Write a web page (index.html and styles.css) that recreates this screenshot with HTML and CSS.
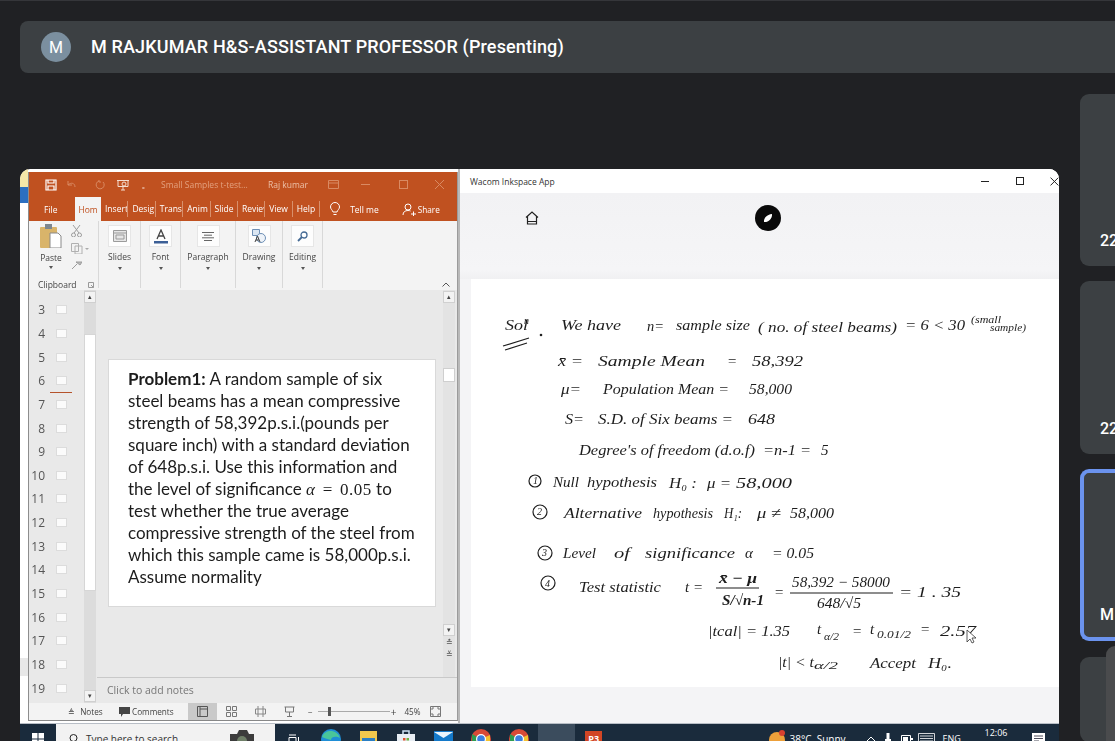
FILE: index.html
```html
<!DOCTYPE html>
<html lang="en">
<head>
<meta charset="utf-8">
<title>Presentation</title>
<link rel="stylesheet" href="styles.css">
</head>
<body>
<header class="bar">
  <span class="avatar">M</span>
  <span class="bar-name">M RAJKUMAR H&amp;S-ASSISTANT PROFESSOR (Presenting)</span>
</header>
<main class="stage">
  <section class="share">
    <div class="desktop">
      <div class="peek"><i class="peek-y"></i><i class="peek-b"></i><i class="peek-w"></i><i class="peek-g"></i><i class="peek-w2"></i></div>
      <div class="ppt">
        <div class="ppt-title">
          <svg class="qa qa-save" width="12" height="12" viewBox="0 0 12 12"><path d="M1 1h10v10H1zM3 1v3h6V1M3 11V7h6v4" fill="none" stroke="#fff" stroke-width="1.2"/></svg>
          <svg class="qa qa-undo" width="14" height="10" viewBox="0 0 14 10"><path d="M2 1v4h4M2 5c3-3 7-2 7 2" fill="none" stroke="#d98a63" stroke-width="1"/></svg>
          <svg class="qa qa-redo" width="10" height="10" viewBox="0 0 10 10"><path d="M8 2a4 4 0 1 1-4-1M4 0v2h2" fill="none" stroke="#d98a63" stroke-width="1"/></svg>
          <svg class="qa qa-show" width="12" height="12" viewBox="0 0 12 12"><path d="M0 1.5h12M1 1.5v6h10v-6M6 8v3M4 11h4" fill="none" stroke="#f4ddd0" stroke-width="1"/><circle cx="7" cy="5" r="2" fill="none" stroke="#f4ddd0"/></svg>
          <span class="qa-drop">₌</span>
          <span class="doc-name">Small Samples t-test...</span>
          <span class="user-name">Raj kumar</span>
          <svg class="qa qa-disp" width="11" height="9" viewBox="0 0 11 9"><path d="M.5.5h10v8H.5zM.5 3h10" fill="none" stroke="#d98a63"/></svg>
          <span class="win-min"></span>
          <span class="win-max"></span>
          <svg class="qa qa-close" width="9" height="9" viewBox="0 0 9 9"><path d="M0 0l9 9M9 0L0 9" stroke="#d98a63"/></svg>
        </div>
        <nav class="ppt-tabs">
          <span class="tab-file">File</span>
          <span class="tab-home">Hom</span>
          <span class="tab">Insert</span>
          <span class="tab">Design</span>
          <span class="tab">Trans</span>
          <span class="tab">Anim</span>
          <span class="tab">Slide</span>
          <span class="tab">Review</span>
          <span class="tab">View</span>
          <span class="tab">Help</span>
          <svg class="bulb" width="12" height="14" viewBox="0 0 12 14"><path d="M4 10C3.500 8 1.500 7 1.500 5a4.500 4.500 0 0 1 9 0c0 2-2 3-2.500 5zM4.500 12.500h3" fill="none" stroke="#fff"/></svg>
          <span class="tell">Tell me</span>
          <svg class="share-ico" width="14" height="13" viewBox="0 0 14 13"><circle cx="6" cy="4" r="3" fill="none" stroke="#fff"/><path d="M1 12c0-3 2-4.500 5-4.500 1 0 2 .2 2.500.5M9 11h5M11.500 8.500v5" fill="none" stroke="#fff"/></svg>
          <span class="share-label">Share</span>
        </nav>
        <div class="ribbon">
          <div class="rgroup rgroup-clip">
            <div class="clip-top">
              <div class="paste">
                <svg width="22" height="24" viewBox="0 0 22 24"><rect x="0" y="3" width="17" height="21" rx="1" fill="#d9b46a"/><rect x="5" y="0" width="7" height="5" fill="#7d8790"/><path d="M10 9h8l3 3v12H10z" fill="#fff" stroke="#8a8a8a"/></svg>
                <span class="rlabel">Paste</span>
                <span class="caret"></span>
              </div>
              <div class="clip-small">
                <svg width="11" height="12" viewBox="0 0 11 12"><path d="M2 0l6 8M9 0L3 8" stroke="#9c9c9c" fill="none"/><circle cx="2.500" cy="10" r="2" fill="none" stroke="#9c9c9c"/><circle cx="8.500" cy="10" r="2" fill="none" stroke="#9c9c9c"/></svg>
                <svg width="18" height="11" viewBox="0 0 18 11"><path d="M.5.5h7v8h-7zM4 3h7v8H4z" fill="#f3f3f3" stroke="#b0b0b0"/><path d="M14 5l2 2 2-2" fill="#aaa"/></svg>
                <svg width="11" height="10" viewBox="0 0 11 10"><path d="M1 9l5-5M5 2l4 3 2-3z" stroke="#9c9c9c" fill="#bbb"/></svg>
              </div>
            </div>
            <div class="clip-name"><span>Clipboard</span><svg width="6" height="6" viewBox="0 0 6 6"><path d="M.5.5h5v5h-5zM3 3l2.500 2.500" fill="none" stroke="#999"/></svg></div>
          </div>
          <div class="rgroup rgroup-slides">
            <span class="rbtn"><svg width="14" height="12" viewBox="0 0 14 12"><path d="M.5.5h13v11H.5zM.5 3h13M3 5h8v4H3z" fill="#e6e6e6" stroke="#9b9b9b"/></svg></span>
            <span class="rlabel">Slides</span><span class="caret"></span>
          </div>
          <div class="rgroup rgroup-font">
            <span class="rbtn"><svg width="14" height="15" viewBox="0 0 14 15"><path d="M3 10l4-9 4 9M4.500 7h5" fill="none" stroke="#444" stroke-width="1.300"/><rect y="12" width="14" height="2.500" fill="#3c5f96"/></svg></span>
            <span class="rlabel">Font</span><span class="caret"></span>
          </div>
          <div class="rgroup rgroup-para">
            <span class="rbtn"><svg width="12" height="9" viewBox="0 0 12 9"><path d="M0 .5h12M2 3.200h8M0 5.800h12M2 8.500h8" stroke="#666"/></svg></span>
            <span class="rlabel">Paragraph</span><span class="caret"></span>
          </div>
          <div class="rgroup rgroup-draw">
            <span class="rbtn"><svg width="14" height="14" viewBox="0 0 14 14"><path d="M.5.5h7v6h-7z" fill="#dbe6f2" stroke="#6e8fb5"/><circle cx="9" cy="9" r="4.500" fill="#eef3f9" stroke="#6e8fb5"/><path d="M3 13l2.500-6 2.500 6M4 11h3" fill="none" stroke="#444"/></svg></span>
            <span class="rlabel">Drawing</span><span class="caret"></span>
          </div>
          <div class="rgroup rgroup-edit">
            <span class="rbtn"><svg width="11" height="11" viewBox="0 0 11 11"><circle cx="7" cy="4" r="3" fill="#fff" stroke="#456a94" stroke-width="1.300"/><path d="M5 6l-4 4" stroke="#456a94" stroke-width="1.800"/></svg></span>
            <span class="rlabel">Editing</span><span class="caret"></span>
          </div>
          <svg class="collapse" width="8" height="5" viewBox="0 0 8 5"><path d="M.5 4.500L4 1l3.500 3.500" fill="none" stroke="#555"/></svg>
        </div>
        <div class="workspace">
          <aside class="thumbs">
            <ol class="thumb-list">
              <li><span class="num">3</span><i class="thumb"></i></li>
              <li><span class="num">4</span><i class="thumb"></i></li>
              <li><span class="num">5</span><i class="thumb"></i></li>
              <li><span class="num">6</span><i class="thumb"></i></li>
              <li><span class="num">7</span><i class="thumb"></i></li>
              <li><span class="num">8</span><i class="thumb"></i></li>
              <li><span class="num">9</span><i class="thumb"></i></li>
              <li><span class="num">10</span><i class="thumb"></i></li>
              <li><span class="num">11</span><i class="thumb"></i></li>
              <li><span class="num">12</span><i class="thumb"></i></li>
              <li><span class="num">13</span><i class="thumb"></i></li>
              <li><span class="num">14</span><i class="thumb"></i></li>
              <li><span class="num">15</span><i class="thumb"></i></li>
              <li><span class="num">16</span><i class="thumb"></i></li>
              <li><span class="num">17</span><i class="thumb"></i></li>
              <li><span class="num">18</span><i class="thumb"></i></li>
              <li><span class="num">19</span><i class="thumb"></i></li>
            </ol>
            <i class="insert-mark"></i>
            <div class="vscroll">
              <span class="sbtn">▴</span>
              <i class="vthumb"></i>
              <span class="sbtn sbtn-end">▾</span>
            </div>
          </aside>
          <div class="editor">
            <div class="editor-top">
              <div class="slide-wrap">
                <article class="slide">
                  <p><b>Problem1:</b> A random sample of six steel beams has a mean compressive strength of 58,392p.s.i.(pounds per square inch) with a standard deviation of 648p.s.i. Use this information and the level of significance <span class="math"><i>α</i> = 0.05</span> to test whether the true average compressive strength of the steel from which this sample came is 58,000p.s.i. Assume normality</p>
                </article>
              </div>
              <div class="rscroll">
                <span class="sbtn">▴</span>
                <i class="rthumb"></i>
                <span class="sbtn rs-down">▾</span>
                <span class="rs-page">≛</span>
                <span class="rs-page">≚</span>
              </div>
            </div>
            <div class="notes">Click to add notes</div>
          </div>
        </div>
        <footer class="status">
          <span class="st-notes">≜ Notes</span>
          <svg class="st-com-ico" width="11" height="10" viewBox="0 0 11 10"><path d="M0 0h11v7H4L2 10V7H0z" fill="#444"/></svg>
          <span class="st-com">Comments</span>
          <span class="view view-on"><svg width="11" height="11" viewBox="0 0 11 11"><path d="M.5.5h10v10H.5zM3 .5v10M3 3h7.500" fill="none" stroke="#555"/></svg></span>
          <span class="view"><svg width="11" height="11" viewBox="0 0 11 11"><path d="M.5.5h4v4h-4zM6.500.5h4v4h-4zM.5 6.500h4v4h-4zM6.500 6.500h4v4h-4z" fill="none" stroke="#777"/></svg></span>
          <span class="view"><svg width="11" height="11" viewBox="0 0 11 11"><path d="M.5 3h10v5H.5zM3 0v11M8 0v11" fill="none" stroke="#888"/></svg></span>
          <span class="view"><svg width="11" height="11" viewBox="0 0 11 11"><path d="M.5 1h10M1.500 1v5h8V1M5.500 6v4M3 10.500h5" fill="none" stroke="#777"/></svg></span>
          <span class="zoom-minus">−</span>
          <span class="zoom-track"><i class="zoom-knob"></i></span>
          <span class="zoom-plus">+</span>
          <span class="zoom-pct">45%</span>
          <svg class="fit" width="11" height="11" viewBox="0 0 11 11"><path d="M.5.5h10v10H.5zM2 4V2h2M9 4V2H7M2 7v2h2M9 7v2H7" fill="none" stroke="#777"/></svg>
        </footer>
      </div>
      <div class="split"></div>
      <div class="inkspace">
        <div class="ink-title">
          <span class="ink-app">Wacom Inkspace App</span>
          <span class="ink-min"></span>
          <span class="ink-max"></span>
          <svg class="ink-close" width="9" height="9" viewBox="0 0 9 9"><path d="M.5.500l8 8M8.500.5l-8 8" stroke="#222"/></svg>
        </div>
        <div class="ink-tools">
          <svg class="home" width="16" height="16" viewBox="0 0 16 16"><path d="M2 7.500L8 2l6 5.500M3.500 6.500v7.500h9V6.500M3 11.500h10" fill="none" stroke="#222" stroke-width="1.200"/></svg>
          <span class="pen"><svg width="12" height="12" viewBox="0 0 12 12"><path d="M2 10c-.5-4 3-7.500 8-8 .5 5-4 8.500-8 8z" fill="#fff"/></svg></span>
        </div>
        <div class="paper">
          <svg class="notes-svg" width="588" height="408" viewBox="471 279 588 408">
            <text class="ink" x="505" y="330" textLength="23" lengthAdjust="spacingAndGlyphs">Sol</text><text class="ink ink-sm" x="524" y="324">n</text>
            <path class="pen-line" d="M503 346l26-8M505 350l22-7"/>
            <circle cx="541" cy="335" r="1.300" fill="#222"/>
            <text class="ink" x="561" y="330" textLength="60" lengthAdjust="spacingAndGlyphs">We have</text>
            <text class="ink" x="647" y="331" textLength="17" lengthAdjust="spacingAndGlyphs">n=</text>
            <text class="ink" x="676" y="330" textLength="74" lengthAdjust="spacingAndGlyphs">sample size</text>
            <text class="ink" x="758" y="332" textLength="139" lengthAdjust="spacingAndGlyphs">( no. of steel beams)</text>
            <text class="ink" x="905" y="330" textLength="60" lengthAdjust="spacingAndGlyphs">= 6 &lt; 30</text>
            <text class="ink ink-sm" x="971" y="323" textLength="30" lengthAdjust="spacingAndGlyphs">(small</text>
            <text class="ink ink-sm" x="990" y="331" textLength="36" lengthAdjust="spacingAndGlyphs">sample)</text>

            <text class="ink" x="558" y="366" textLength="25" lengthAdjust="spacingAndGlyphs">x̄ =</text>
            <text class="ink" x="598" y="366" textLength="107" lengthAdjust="spacingAndGlyphs">Sample Mean</text>
            <text class="ink" x="727" y="366">=</text>
            <text class="ink" x="752" y="366" textLength="51" lengthAdjust="spacingAndGlyphs">58,392</text>

            <text class="ink" x="561" y="394" textLength="20" lengthAdjust="spacingAndGlyphs">μ=</text>
            <text class="ink" x="603" y="394" textLength="126" lengthAdjust="spacingAndGlyphs">Population Mean =</text>
            <text class="ink" x="749" y="394" textLength="43" lengthAdjust="spacingAndGlyphs">58,000</text>

            <text class="ink" x="565" y="424" textLength="19" lengthAdjust="spacingAndGlyphs">S=</text>
            <text class="ink" x="598" y="424" textLength="135" lengthAdjust="spacingAndGlyphs">S.D. of Six beams =</text>
            <text class="ink" x="748" y="424" textLength="27" lengthAdjust="spacingAndGlyphs">648</text>

            <text class="ink" x="579" y="455" textLength="176" lengthAdjust="spacingAndGlyphs">Degree's of freedom (d.o.f)</text>
            <text class="ink" x="763" y="455" textLength="48" lengthAdjust="spacingAndGlyphs">=n-1 =</text>
            <text class="ink" x="821" y="455">5</text>

            <circle class="pen-line" cx="535" cy="481" r="6"/>
            <text class="ink ink-sm" x="533" y="484">1</text>
            <text class="ink" x="553" y="487" textLength="26" lengthAdjust="spacingAndGlyphs">Null</text>
            <text class="ink" x="587" y="487" textLength="70" lengthAdjust="spacingAndGlyphs">hypothesis</text>
            <text class="ink" x="669" y="488" textLength="28" lengthAdjust="spacingAndGlyphs">H₀ :</text>
            <text class="ink" x="707" y="488" textLength="24" lengthAdjust="spacingAndGlyphs">μ =</text>
            <text class="ink" x="736" y="488" textLength="56" lengthAdjust="spacingAndGlyphs">58,000</text>

            <circle class="pen-line" cx="540" cy="512" r="7"/>
            <text class="ink ink-sm" x="537" y="515">2</text>
            <text class="ink" x="564" y="518" textLength="78" lengthAdjust="spacingAndGlyphs">Alternative</text>
            <text class="ink" x="653" y="518" textLength="60" lengthAdjust="spacingAndGlyphs">hypothesis</text>
            <text class="ink" x="724" y="518" textLength="18" lengthAdjust="spacingAndGlyphs">H₁:</text>
            <text class="ink" x="757" y="518" textLength="24" lengthAdjust="spacingAndGlyphs">μ ≠</text>
            <text class="ink" x="790" y="518" textLength="44" lengthAdjust="spacingAndGlyphs">58,000</text>

            <circle class="pen-line" cx="545" cy="553" r="7"/>
            <text class="ink ink-sm" x="542" y="556">3</text>
            <text class="ink" x="563" y="558" textLength="33" lengthAdjust="spacingAndGlyphs">Level</text>
            <text class="ink" x="614" y="558" textLength="16" lengthAdjust="spacingAndGlyphs">of</text>
            <text class="ink" x="645" y="558" textLength="90" lengthAdjust="spacingAndGlyphs">significance</text>
            <text class="ink" x="745" y="558">α</text>
            <text class="ink" x="772" y="558" textLength="42" lengthAdjust="spacingAndGlyphs">= 0.05</text>

            <circle class="pen-line" cx="548" cy="583" r="7"/>
            <text class="ink ink-sm" x="545" y="587">4</text>
            <text class="ink" x="579" y="592" textLength="82" lengthAdjust="spacingAndGlyphs">Test statistic</text>
            <text class="ink" x="685" y="592" textLength="18" lengthAdjust="spacingAndGlyphs">t =</text>
            <text class="ink ink-b" x="719" y="583" textLength="38" lengthAdjust="spacingAndGlyphs">x̄ − μ</text>
            <path class="pen-line" d="M716 588h43M790 593h103"/>
            <text class="ink ink-b" x="722" y="605" textLength="42" lengthAdjust="spacingAndGlyphs">S/√n-1</text>
            <text class="ink" x="774" y="597">=</text>
            <text class="ink" x="792" y="587" textLength="98" lengthAdjust="spacingAndGlyphs">58,392 − 58000</text>
            <text class="ink" x="817" y="608" textLength="44" lengthAdjust="spacingAndGlyphs">648/√5</text>
            <text class="ink" x="899" y="597" textLength="62" lengthAdjust="spacingAndGlyphs">= 1 . 35</text>

            <text class="ink" x="708" y="636" textLength="82" lengthAdjust="spacingAndGlyphs">|tcal| = 1.35</text>
            <text class="ink" x="817" y="634">t</text><text class="ink ink-sm" x="824" y="640" textLength="15" lengthAdjust="spacingAndGlyphs">α/2</text>
            <text class="ink" x="852" y="636">=</text>
            <text class="ink" x="870" y="634">t</text><text class="ink ink-sm" x="877" y="638" textLength="34" lengthAdjust="spacingAndGlyphs">0.01/2</text>
            <text class="ink" x="920" y="634">=</text>
            <text class="ink" x="940" y="636" textLength="36" lengthAdjust="spacingAndGlyphs">2.57</text>
            <path d="M967 630v12l3-3 2 4 2-1-2-4h4z" fill="#fff" stroke="#333" stroke-width=".8"/>

            <text class="ink" x="778" y="667" textLength="36" lengthAdjust="spacingAndGlyphs">|t| &lt; t</text><text class="ink ink-sm" x="814" y="669" textLength="24" lengthAdjust="spacingAndGlyphs">α/2</text>
            <text class="ink" x="870" y="668" textLength="46" lengthAdjust="spacingAndGlyphs">Accept</text>
            <text class="ink" x="928" y="668" textLength="24" lengthAdjust="spacingAndGlyphs">H₀.</text>
          </svg>
        </div>
      </div>
    </div>
    <footer class="taskbar">
      <span class="start"><svg width="12" height="12" viewBox="0 0 12 12"><path d="M0 0h5.500v5.500H0zM6.500 0H12v5.500H6.500zM0 6.500h5.500V12H0zM6.500 6.500H12V12H6.500z" fill="#fff"/></svg></span>
      <div class="search">
        <svg width="10" height="10" viewBox="0 0 10 10"><circle cx="5.500" cy="4" r="3.500" fill="none" stroke="#222"/><path d="M3 7L0 10" stroke="#222"/></svg>
        <span class="search-text">Type here to search</span>
        <svg class="cam" width="28" height="22" viewBox="0 0 28 22"><path d="M2 6h7l2-4h8l2 4h5v16H2z" fill="#3c3c3c"/><circle cx="14" cy="13" r="5" fill="#6f7f68"/></svg>
      </div>
      <span class="tb"><svg width="12" height="10" viewBox="0 0 12 10"><path d="M1 3.500h7v5H1zM1 1h7M1 10h7M10.500 3v5" fill="none" stroke="#fff"/></svg></span>
      <span class="tb"><svg width="20" height="20" viewBox="0 0 20 20"><circle cx="10" cy="10" r="10" fill="#1f8ed6"/><path d="M1 8c3-8 15-8 18 1-3-2-9-2-9 2-4-1-7-2-9-3z" fill="#49c59a"/></svg></span>
      <span class="tb"><svg width="17" height="16" viewBox="0 0 17 16"><path d="M0 0h17v16H0z" fill="#f1c84d"/><path d="M2 7h13v4H2z" fill="#2b7fc4"/></svg></span>
      <span class="tb"><svg width="18" height="18" viewBox="0 0 18 18"><path d="M6 4V1h6v3" fill="none" stroke="#cfe3f4" stroke-width="1.500"/><path d="M0 4h18v14H0z" fill="#e8eef4"/><path d="M6 8h2.500v2.500H6z" fill="#e0502f"/><path d="M9.500 8H12v2.500H9.500z" fill="#6eb43f"/><path d="M6 11.500h2.500V14H6z" fill="#2d8fe0"/><path d="M9.500 11.500H12V14H9.500z" fill="#f6b81e"/></svg></span>
      <span class="tb"><svg width="19" height="16" viewBox="0 0 19 16"><path d="M0 0h19v16H0z" fill="#1479c9"/><path d="M0 1l9.500 6L19 1" fill="#eaf4fc"/></svg></span>
      <span class="tb"><svg width="20" height="20" viewBox="0 0 20 20"><circle cx="10" cy="10" r="10" fill="#d84a37"/><path d="M10 10L1 5v15h9z" fill="#2f9c50"/><path d="M10 10l9-4v14h-9z" fill="#f3c22f"/><circle cx="10" cy="10" r="5" fill="#fff"/><circle cx="10" cy="10" r="3.800" fill="#3b7fe0"/></svg></span>
      <span class="tb"><svg width="20" height="20" viewBox="0 0 20 20"><circle cx="10" cy="10" r="10" fill="#d84a37"/><path d="M10 10L1 5v15h9z" fill="#2f9c50"/><path d="M10 10l9-4v14h-9z" fill="#f3c22f"/><circle cx="10" cy="10" r="5" fill="#fff"/><circle cx="10" cy="10" r="3.800" fill="#3b7fe0"/></svg></span>
      <span class="tb tb-on"></span>
      <span class="tb"><span class="ppt-ico">P3</span></span>
      <div class="tray">
        <svg width="16" height="18" viewBox="0 0 16 18"><circle cx="8" cy="10" r="8" fill="#eda03a"/><circle cx="13" cy="3" r="3" fill="#d8402f"/></svg>
        <span class="tray-wx">38°C&nbsp; Sunny</span>
        <svg class="t-chev" width="10" height="6" viewBox="0 0 10 6"><path d="M.5 5.500L5 1l4.500 4.500" fill="none" stroke="#fff"/></svg>
        <svg class="t-usb" width="6" height="11" viewBox="0 0 6 11"><path d="M1.500 0h3v6h1.500v5H0V6h1.500z" fill="#fff"/></svg>
        <svg class="t-bat" width="12" height="9" viewBox="0 0 12 9"><path d="M.5 1.500h9v7h-9z" fill="none" stroke="#fff"/><path d="M10 4h2v2h-2zM2 3h5v4H2z" fill="#fff"/></svg>
        <svg class="t-key" width="17" height="12" viewBox="0 0 17 12"><path d="M.5.500h16v11H.5zM2 3h13M2 5.500h13M2 8h13" fill="none" stroke="#fff" stroke-width=".8"/></svg>
        <span class="t-eng">ENG</span>
        <span class="t-clock">12:06</span>
        <svg class="t-note" width="13" height="11" viewBox="0 0 13 11"><path d="M0 0h13v11H0z" fill="#fff"/><path d="M2 3h9M2 5.500h9M2 8h5" stroke="#223" stroke-width=".8"/></svg>
      </div>
    </footer>
  </section>
  <aside class="side">
    <div class="tile"><span class="tile-name">22</span></div>
    <div class="tile"><span class="tile-name">22</span></div>
    <div class="tile tile-active"><span class="tile-name">M</span></div>
    <div class="tile tile-last"><i class="tile-over"></i></div>
  </aside>
</main>
</body>
</html>
```

FILE: styles.css
```css
* { box-sizing: border-box; }
html, body { margin: 0; height: 741px; overflow: hidden; }
body { background: #202124; font-family: Roboto, "Liberation Sans", sans-serif; color: #fff; width: 1115px; padding-top: 21px; position: relative; border-top: 1px solid #35363a; }

.bar { height: 52px; margin: -1px 0 0 20px; width: 1095px; background: #3c4043; border-radius: 8px 0 0 8px; display: flex; align-items: center; padding-left: 21px; }
.avatar { width: 30px; height: 30px; border-radius: 50%; background: #7b8f9f; display: flex; align-items: center; justify-content: center; font-size: 16px; }
.bar-name { margin: -1px 0 0 20px; font-size: 18px; font-weight: 500; white-space: nowrap; letter-spacing: .15px; }

.stage { display: flex; margin-top: 21px; height: 647px; overflow: hidden; }
.share { margin: 75px 0 0 20px; width: 1039px; height: 572px; display: flex; flex-direction: column; background: #fff; border-radius: 10px 10px 0 0; overflow: hidden; flex: none; }
.desktop { display: flex; height: 554px; flex: none; }

.peek { width: 8px; flex: none; display: flex; flex-direction: column; }
.peek i { display: block; }
.peek-y { height: 18px; background: #f5e7a8; }
.peek-b { height: 16px; background: #2c6fc0; }
.peek-w { height: 455px; background: #fff; }
.peek-g { height: 18px; background: #e8e8e8; }
.peek-w2 { flex: 1; background: #fff; }

.ppt { width: 430px; flex: none; display: flex; flex-direction: column; font-family: "Open Sans", "Liberation Sans", sans-serif; background: #ededed; border-left: 1px solid #8d8d8d; border-right: 1px solid #9b9b9b; border-bottom: 1px solid #888; margin: 3px 0 2px; filter: blur(.35px); }

.ppt-title { height: 25px; background: #c05120; display: flex; align-items: center; flex: none; color: #e3a17f; font-size: 8.500px; white-space: nowrap; }
.qa { flex: none; }
.qa-save { margin-left: 16px; }
.qa-undo { margin-left: 9px; }
.qa-redo { margin-left: 15px; }
.qa-show { margin-left: 12px; }
.qa-drop { margin-left: 13px; color: #f5dccd; font-size: 8px; width: 6px; }
.doc-name { margin-left: 13px; width: 107px; }
.user-name { width: 50px; color: #ecc0a8; }
.qa-disp { margin-left: 10px; }
.win-min { margin-left: 22px; width: 9px; height: 1px; background: #d98a63; }
.win-max { margin-left: 29px; width: 9px; height: 9px; border: 1px solid #d98a63; }
.qa-close { margin-left: 27px; }

.ppt-tabs { height: 24px; background: #c05120; display: flex; align-items: center; flex: none; font-size: 8.500px; color: #fff; white-space: nowrap; }
.tab-file { width: 46px; padding-left: 15px; }
.tab-home { width: 26px; height: 24px; background: #f3f3f3; color: #c05120; display: flex; align-items: center; justify-content: center; overflow: hidden; }
.tab { width: 27.400px; height: 16px; line-height: 16px; overflow: hidden; border-right: 1px solid #d8906c; padding-left: 4px; }
.bulb { margin-left: 9px; }
.tell { margin-left: 9px; }
.share-ico { margin-left: 23px; }
.share-label { margin-left: 2px; font-size: 8.200px; }

.ribbon { height: 69px; background: #f3f3f3; display: flex; flex: none; color: #444; position: relative; }
.rgroup { border-right: 1px solid #d8d8d8; display: flex; flex-direction: column; align-items: center; height: 67px; padding-top: 4px; flex: none; }
.rgroup-clip { width: 70px; padding-top: 3px; }
.rgroup-slides { width: 42px; }
.rgroup-font { width: 40px; }
.rgroup-para { width: 55px; }
.rgroup-draw { width: 47px; }
.rgroup-edit { width: 40px; }
.rbtn { width: 23px; height: 22px; background: #fdfdfd; border: 1px solid #e6e6e6; display: flex; align-items: center; justify-content: center; flex: none; }
.rlabel { font-size: 8.500px; line-height: 12px; margin-top: 4px; white-space: nowrap; }
.caret { width: 0; height: 0; border: 2px solid transparent; border-top: 3px solid #555; margin-top: 4px; }
.clip-top { display: flex; width: 100%; padding-left: 9px; height: 52px; }
.paste { width: 26px; display: flex; flex-direction: column; align-items: center; }
.paste .rlabel { margin-top: 4px; }
.paste .caret { margin-top: 2px; }
.clip-small { margin-left: 7px; display: flex; flex-direction: column; gap: 6px; padding-top: 1px; }
.clip-name { font-size: 8.500px; display: flex; align-items: center; justify-content: space-between; width: 100%; padding: 0 4px 0 9px; margin-top: 8px; }
.collapse { position: absolute; right: 7px; bottom: 3px; }

.workspace { flex: 1; display: flex; min-height: 0; background: #e9e9e9; }
.thumbs { width: 68px; flex: none; position: relative; display: flex; color: #555; }
.thumb-list { list-style: none; margin: 0; padding: 8px 0 0; width: 54px; }
.thumb-list li { height: 23.650px; display: flex; align-items: center; }
.num { width: 16px; text-align: right; font-size: 12px; flex: none; }
.thumb { width: 11px; height: 9px; background: #fbfbfb; border: 1px solid #dcdcdc; margin-left: 11px; }
.insert-mark { position: absolute; left: 21px; top: 102px; width: 22px; height: 1px; background: #b5532c; }
.vscroll { width: 12px; margin-left: 1px; background: #dcdcdc; display: flex; flex-direction: column; align-items: center; padding-top: 1px; }
.sbtn { width: 12px; height: 12px; background: #f3f3f3; border: 1px solid #d0d0d0; font-size: 7px; line-height: 10px; text-align: center; color: #444; flex: none; }
.vthumb { width: 12px; height: 257px; margin-top: 31px; background: #fff; border: 1px solid #d6d6d6; }
.sbtn-end { margin-top: auto; margin-bottom: 1px; }

.editor { flex: 1; display: flex; flex-direction: column; min-width: 0; }
.editor-top { flex: 1; display: flex; min-height: 0; border-bottom: 1px solid #c9c9c9; }
.slide-wrap { flex: 1; padding: 69px 0 0 11px; }
.slide { width: 328px; height: 248px; background: #fff; border: 1px solid #d9d9d9; padding: 8px 17px 0 19px; color: #1c1c1c; font-family: Lato, Carlito, "Liberation Sans", sans-serif; font-size: 17px; line-height: 21.900px; }
.slide p { margin: 0; }
.math { font-family: "Liberation Serif", serif; font-size: 17px; letter-spacing: .5px; word-spacing: 2.500px; }
.rscroll { width: 12px; flex: none; margin-right: 2px; background: #e3e3e3; display: flex; flex-direction: column; padding-top: 1px; }
.rthumb { height: 14px; margin-top: 65px; background: #fff; border: 1px solid #cfcfcf; flex: none; }
.rs-down { margin-top: 242px; }
.rs-page { font-size: 8px; height: 12px; line-height: 12px; text-align: center; color: #555; }
.notes { height: 25px; flex: none; font-size: 10.500px; color: #777; padding: 5px 0 0 10px; white-space: nowrap; }

.status { height: 17px; flex: none; background: #f3f3f3; display: flex; align-items: center; font-size: 8.200px; color: #444; white-space: nowrap; }
.st-notes { margin-left: 39px; width: 37px; word-spacing: 3px; }
.st-com-ico { margin-left: 14px; }
.st-com { margin-left: 2px; width: 56px; }
.view { width: 29px; height: 17px; display: flex; align-items: center; justify-content: center; flex: none; }
.view-on { background: #c9c9c9; }
.zoom-minus { margin-left: 4px; }
.zoom-track { width: 72px; height: 1px; background: #aaa; margin-left: 5px; position: relative; }
.zoom-knob { position: absolute; left: 10px; top: -4px; width: 3px; height: 9px; background: #555; }
.zoom-plus { margin-left: 1px; font-size: 10px; }
.zoom-pct { margin-left: 8px; }
.fit { margin-left: 9px; }

.split { width: 2px; flex: none; background: #b9b9b9; }
.inkspace { flex: 1; display: flex; flex-direction: column; background: #f4f4f6; min-width: 0; }
.ink-title { height: 24px; background: #fff; flex: none; display: flex; align-items: center; font-family: "Open Sans", "Liberation Sans", sans-serif; font-size: 8.500px; color: #333; padding-left: 10px; white-space: nowrap; }
.ink-app { width: 519px; }
.ink-min { width: 8px; height: 1px; background: #222; }
.ink-max { margin-left: 27px; width: 8px; height: 8px; border: 1px solid #222; }
.ink-close { margin-left: 26px; }
.ink-tools { height: 86px; flex: none; display: flex; align-items: flex-start; padding: 17px 0 0 64px; background: linear-gradient(#f2f2f4, #f5f5f7 90%, #f0f0f2); }
.home { flex: none; }
.pen { margin: -5px 0 0 215px; width: 26px; height: 26px; border-radius: 50%; background: #0a0a0a; display: flex; align-items: center; justify-content: center; flex: none; }
.paper { height: 408px; margin-left: 11px; background: #fff; flex: none; }
.notes-svg { display: block; filter: blur(.3px); }
.ink { font-family: "Liberation Serif", serif; font-style: italic; font-size: 15px; fill: #1d1d1d; }
.ink-sm { font-size: 10px; }
.ink-b { font-weight: 700; }
.pen-line { fill: none; stroke: #1d1d1d; stroke-width: 1.200; }

.taskbar { height: 30px; flex: none; background: #1a2b3c; border-top: 1px solid #b8bec6; display: flex; align-items: center; font-family: "Open Sans", "Liberation Sans", sans-serif; }
.start { width: 36px; flex: none; display: flex; justify-content: center; }
.search { width: 219px; height: 29px; background: #f2f2f2; display: flex; align-items: center; padding-left: 12px; color: #333; font-size: 10px; flex: none; }
.search-text { margin-left: 8px; white-space: nowrap; }
.cam { margin-left: 50px; }
.tb { width: 37.500px; height: 29px; flex: none; display: flex; align-items: center; justify-content: center; }
.tb-on { background: #3b4c5d; }
.ppt-ico { width: 17px; height: 16px; background: #d24625; color: #fff; font-size: 9px; font-weight: 700; line-height: 16px; text-align: center; }
.tray { margin-left: 156px; display: flex; align-items: center; height: 29px; color: #fff; font-size: 10px; flex: none; white-space: nowrap; }
.tray-wx { margin-left: 5px; width: 58px; }
.t-chev { margin-left: 18px; }
.t-usb { margin-left: 9px; }
.t-bat { margin-left: 10px; }
.t-key { margin-left: 5px; }
.t-eng { margin-left: 8px; font-size: 9px; width: 18px; }
.t-clock { margin: -12px 0 0 24px; font-size: 9px; width: 20px; }
.t-note { margin-left: 27px; }

.side { margin-left: 21px; flex: none; width: 35px; display: flex; flex-direction: column; gap: 15px; }
.tile { height: 172px; background: #3c4043; border-radius: 9px 0 0 9px; position: relative; flex: none; display: flex; align-items: flex-end; padding: 0 0 16px 20px; font-weight: 500; font-size: 16px; color: #fff; overflow: hidden; }
.tile + .tile { height: 173px; }
.tile-active { height: 172px !important; border: 4px solid #6b93ee; border-right: 0; padding: 0 0 13px 16px; }
.tile-last { height: 85px !important; margin-top: 1px; overflow: visible; }
.tile-over { position: absolute; left: 26px; top: -11px; width: 9px; height: 96px; background: #4a4b4d; border-radius: 9px 0 0 0; }
```
